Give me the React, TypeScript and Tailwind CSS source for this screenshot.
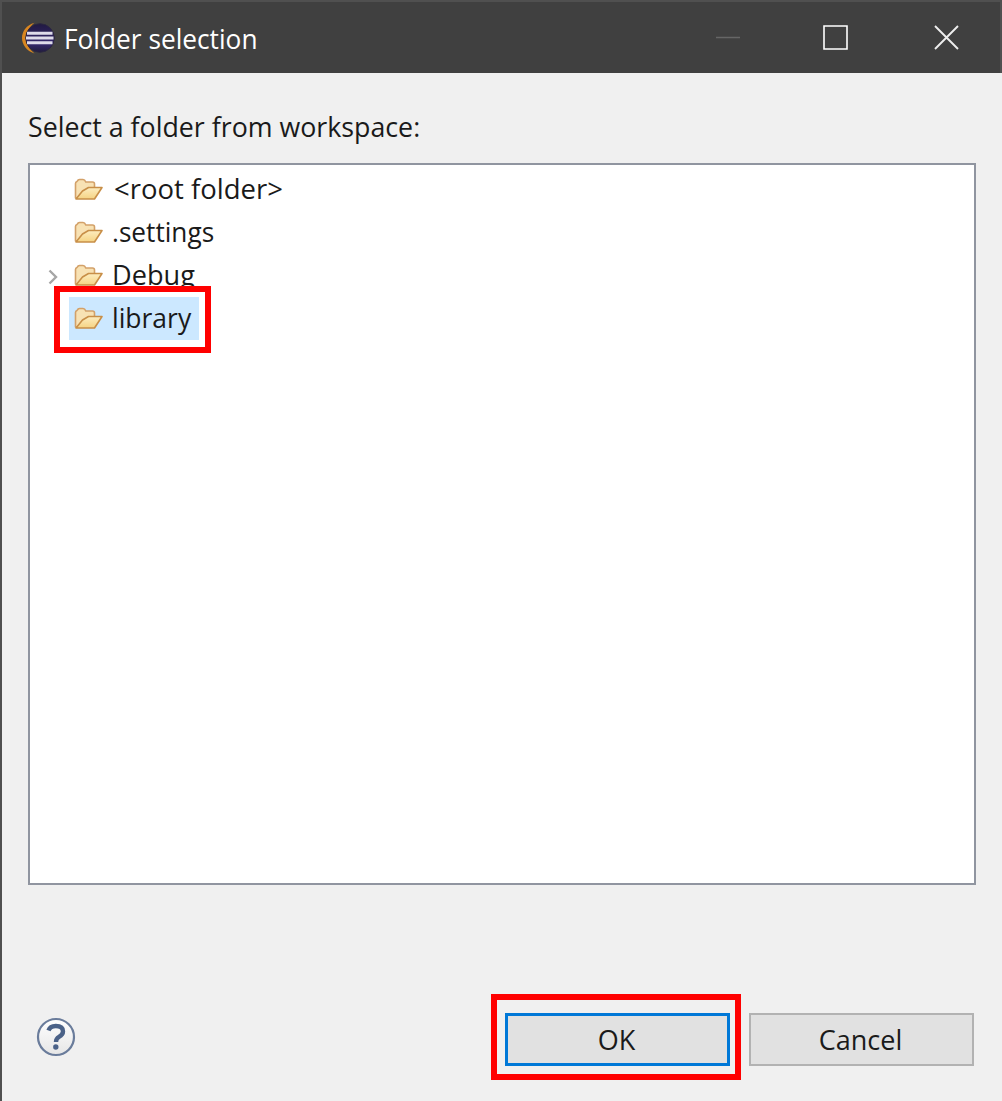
import type { ReactNode } from 'react';

function EclipseIcon() {
  return (
    <svg width="34" height="34" viewBox="0 0 34 34" className="block">
      <defs>
        <linearGradient id="sphere" x1="0" y1="0" x2="0" y2="1">
          <stop offset="0" stopColor="#211a42" />
          <stop offset="0.7" stopColor="#35286f" />
          <stop offset="1" stopColor="#211c3c" />
        </linearGradient>
      </defs>
      <path d="M13.500 1.800C5.500 4 1 10.500 1 17s4.500 13 12.500 15.400C8.500 28.500 5 23 5 17S8.500 5.800 13.500 1.800Z" fill="#d98620" />
      <circle cx="19" cy="17" r="14.300" fill="url(#sphere)" stroke="#2b2740" />
      <path d="M6 12.300H31.500M5 17H32.500M6 21.700H31.500" stroke="#dedbea" strokeWidth="3" />
    </svg>
  );
}

function FolderIcon() {
  return (
    <svg width="30" height="24" viewBox="0 0 30 24" className="block shrink-0">
      <defs>
        <linearGradient id="flap" x1="0" y1="0" x2="0" y2="1">
          <stop offset="0" stopColor="#fdedc0" />
          <stop offset="1" stopColor="#f5d383" />
        </linearGradient>
      </defs>
      <path d="M1.500 20V5.500Q1.500 4 3 3.500Q4 1.500 5.500 1.500H9Q10.800 1.500 11.800 4H18.500Q20.500 4 20.500 6V9.500L8 20Z" fill="#f8e2b4" stroke="#d3a169" strokeWidth="1.600" strokeLinejoin="round" />
      <path d="M2 21L8.500 13L14.500 9.500H28L20.500 21Z" fill="url(#flap)" stroke="#c88f48" strokeWidth="1.600" strokeLinejoin="round" />
    </svg>
  );
}

function Row({ children, arrow = false, selected = false }: { children: ReactNode; arrow?: boolean; selected?: boolean }) {
  return (
    <div className="flex h-[43px] items-center">
      <div className="flex h-full w-[39px] items-center pl-[18px]">
        {arrow && (
          <svg width="10" height="16" viewBox="0 0 10 16" className="mt-[2px] block">
            <path d="M1.500 1.500L8 8L1.500 14.500" fill="none" stroke="#a6a6a6" strokeWidth="2.400" />
          </svg>
        )}
      </div>
      <div className={selected ? 'flex h-full w-[130px] items-center bg-[#cce8ff] pl-[5px]' : 'flex h-full items-center pl-[5px]'}>
        <FolderIcon />
        <span className="pb-[2px]">{children}</span>
      </div>
    </div>
  );
}

export default function App() {
  return (
    <div className="flex h-[1101px] w-[1002px] flex-col border-l-2 border-[#505050] bg-[#f0f0f0] font-['Open_Sans',sans-serif] text-[27px] leading-[43px] whitespace-nowrap text-[#1a1a1a]">
      <header className="flex h-[73px] shrink-0 items-center border-t-2 border-r-2 border-[#505050] bg-[#404040] pl-[19px] text-white">
        <EclipseIcon />
        <h1 className="mt-[1px] ml-[9px] origin-left scale-x-[0.973]">Folder selection</h1>
        <div className="mr-[41px] ml-auto flex items-center">
          <svg width="24" height="26" viewBox="0 0 24 26" className="mr-[83px]"><path d="M0 12.500H24" stroke="#666666" strokeWidth="1.500" /></svg>
          <svg width="25" height="26" viewBox="0 0 25 26" className="mr-[86px]"><path d="M1 1H24V24H1Z" fill="none" stroke="white" strokeWidth="1.600" /></svg>
          <svg width="25" height="26" viewBox="0 0 25 26"><path d="M1 1L24 24M24 1L1 24" stroke="#eeeeee" strokeWidth="1.900" /></svg>
        </div>
      </header>
      <main className="flex flex-col pl-[26px]">
        <p className="mt-[32px] h-[58px] origin-left scale-x-[0.991] self-start">Select a folder from workspace:</p>
        <div className="h-[722px] w-[948px] border-2 border-[#9095a0] bg-white pt-[3px]">
          <Row><span className="ml-[10px] inline-block origin-left scale-x-[1.018]">&lt;root folder&gt;</span></Row>
          <Row><span className="ml-[8px] inline-block origin-left scale-x-[0.970]">.settings</span></Row>
          <Row arrow><span className="ml-[8px] inline-block origin-left scale-x-[1.005]">Debug</span></Row>
          <div className="relative">
            <Row selected><span className="ml-[8px] inline-block origin-left scale-x-[0.980]">library</span></Row>
            <div className="absolute top-[-11px] left-[24px] h-[67px] w-[157px] border-6 border-[#ff0000]" />
          </div>
        </div>
      </main>
      <footer className="mt-[108px] flex h-[88px] items-center pr-[28px] pl-[34px]">
        <svg width="40" height="40" viewBox="0 0 40 40">
          <defs>
            <linearGradient id="help" x1="0" y1="0" x2="0" y2="1"><stop stopColor="#ffffff" /><stop offset="1" stopColor="#e6e6e6" /></linearGradient>
          </defs>
          <circle cx="20" cy="20" r="18" fill="url(#help)" stroke="#6a7c9b" strokeWidth="2.200" />
          <path d="M12.500 13.500Q14 9 19.800 9Q27 9 27 14.500Q27 17.500 23 19.800Q20 21.500 20 25" fill="none" stroke="#4b6288" strokeWidth="4.400" />
          <circle cx="19.800" cy="30" r="2.700" fill="#4b6288" />
        </svg>
        <div className="ml-auto flex h-[86px] w-[250px] items-center border-6 border-[#ff0000] pt-[4px] pl-[8px]">
          <button className="flex h-[53px] w-[225px] items-center justify-center border-3 border-[#0078d7] bg-[#e1e1e1]"><span className="mr-[2px]">OK</span></button>
        </div>
        <button className="mt-[4px] ml-[8px] flex h-[53px] w-[225px] items-center justify-center border-2 border-[#b2b2b2] bg-[#e1e1e1]"><span className="mr-[2px]">Cancel</span></button>
      </footer>
    </div>
  );
}
